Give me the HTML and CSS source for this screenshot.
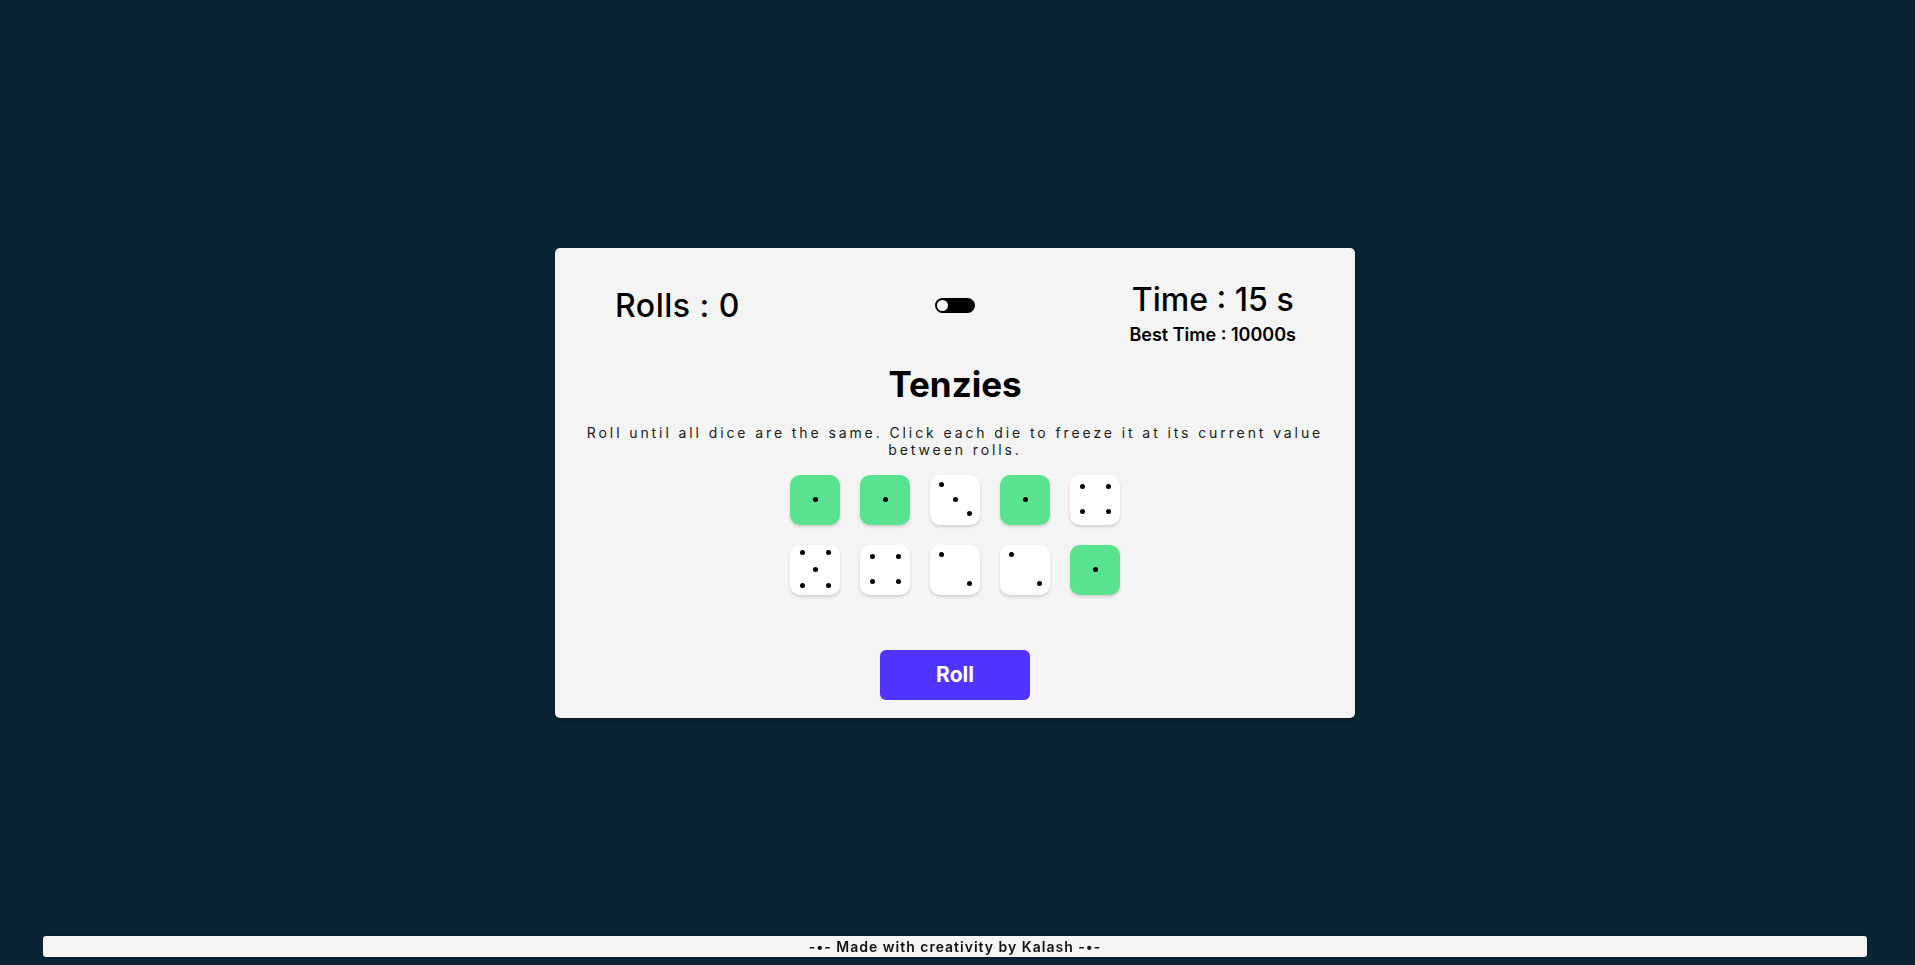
FILE: index.html
```html
<!DOCTYPE html>
<html lang="en">
<head>
<meta charset="utf-8">
<title>Tenzies</title>
<link rel="stylesheet" href="styles.css">
</head>
<body>
<main class="stage">
  <section class="card">
    <header class="top">
      <div class="rolls">Rolls : 0</div>
      <div class="toggle"><span class="knob"></span></div>
      <div class="times">
        <div class="time">Time : 15 s</div>
        <div class="best">Best Time : 10000s</div>
      </div>
    </header>
    <h1 class="title">Tenzies</h1>
    <p class="instructions">Roll until all dice are the same. Click each die to freeze it at its current value between rolls.</p>
    <div class="dice">
      <div class="die held"><span class="dot v1a"></span></div>
      <div class="die held"><span class="dot v1a"></span></div>
      <div class="die"><span class="dot v3a"></span><span class="dot v3b"></span><span class="dot v3c"></span></div>
      <div class="die held"><span class="dot v1a"></span></div>
      <div class="die"><span class="dot v4a"></span><span class="dot v4b"></span><span class="dot v4c"></span><span class="dot v4d"></span></div>
      <div class="die"><span class="dot v5a"></span><span class="dot v5b"></span><span class="dot v5c"></span><span class="dot v5d"></span><span class="dot v5e"></span></div>
      <div class="die"><span class="dot v4a"></span><span class="dot v4b"></span><span class="dot v4c"></span><span class="dot v4d"></span></div>
      <div class="die"><span class="dot v2a"></span><span class="dot v2b"></span></div>
      <div class="die"><span class="dot v2a"></span><span class="dot v2b"></span></div>
      <div class="die held"><span class="dot v1a"></span></div>
    </div>
    <button class="roll">Roll</button>
  </section>
</main>
<footer class="footer">-•- Made with creativity by Kalash -•-</footer>
</body>
</html>
```
FILE: styles.css
```css
* { box-sizing: border-box; }
html, body { margin: 0; padding: 0; }
body {
  background: #0b2434;
  font-family: Inter, "Noto Sans", sans-serif;
  color: #000;
  height: 965px;
  overflow: hidden;
}
.stage {
  height: 965px;
  display: flex;
  align-items: center;
  justify-content: center;
  padding-right: 5px;
}
.card {
  width: 800px;
  height: 470px;
  background: #f4f4f4;
  border-radius: 5px;
  box-shadow: 0 2px 4px rgba(0,0,0,0.35);
  padding: 32px 0 0;
  display: flex;
  flex-direction: column;
  align-items: center;
}
.top {
  width: 100%;
  display: grid;
  grid-template-columns: 1fr auto 1fr;
  align-items: start;
}
.rolls {
  justify-self: start;
  padding-left: 60px;
  margin-top: 6px;
  font-size: 32px;
  font-weight: 500;
  letter-spacing: 0.5px;
}
.toggle {
  margin-top: 18px;
  width: 40px;
  height: 15px;
  background: #000;
  border-radius: 8px;
  padding: 2px;
}
.knob {
  display: block;
  width: 11px;
  height: 11px;
  border-radius: 50%;
  background: #fff;
}
.times {
  justify-self: end;
  padding-right: 59px;
  text-align: center;
}
.time { font-size: 32px; font-weight: 500; }
.best { font-size: 18px; font-weight: 600; margin-top: 5px; }
.title {
  margin: 18px 0 0;
  font-size: 35px;
  font-weight: 700;
}
.instructions {
  margin: 19px 0 0;
  padding: 0 25px;
  font-size: 14px;
  line-height: 17px;
  letter-spacing: 2.9px;
  text-align: center;
  color: #1a1a1a;
}
.dice {
  margin-top: 17px;
  display: grid;
  grid-template-columns: repeat(5, 50px);
  gap: 20px;
}
.die {
  position: relative;
  width: 50px;
  height: 50px;
  background: #fff;
  border-radius: 10px;
  box-shadow: 0 2px 3px rgba(0,0,0,0.15);
}
.die.held { background: #59e391; }
.dot {
  position: absolute;
  width: 5px;
  height: 5px;
  border-radius: 50%;
  background: #000;
}
.v1a { left: 22.5px; top: 22.5px; }
.v2a { left: 8.5px; top: 7.5px; }
.v2b { left: 37px; top: 36px; }
.v3a { left: 8.5px; top: 7.5px; }
.v3b { left: 23px; top: 22.5px; }
.v3c { left: 37px; top: 36.5px; }
.v4a { left: 10px; top: 9.5px; }
.v4b { left: 35.5px; top: 9.5px; }
.v4c { left: 10px; top: 34.5px; }
.v4d { left: 35.5px; top: 34.5px; }
.v5a { left: 10px; top: 5px; }
.v5b { left: 35.5px; top: 5px; }
.v5c { left: 22.5px; top: 22px; }
.v5d { left: 10px; top: 38px; }
.v5e { left: 35.5px; top: 38px; }
.roll {
  margin-top: 55px;
  width: 150px;
  height: 50px;
  border: none;
  border-radius: 6px;
  background: #5035ff;
  color: #fff;
  font-family: Inter, "Noto Sans", sans-serif;
  font-size: 21px;
  font-weight: 700;
}
.footer {
  position: fixed;
  left: 43px;
  bottom: 8px;
  width: 1824px;
  height: 21px;
  background: #f4f4f4;
  border-radius: 3px;
  box-shadow: 0 0 2px rgba(0,0,0,0.6);
  text-align: center;
  font-size: 14px;
  font-weight: 600;
  letter-spacing: 1px;
  line-height: 21px;
  color: #111;
}
```
